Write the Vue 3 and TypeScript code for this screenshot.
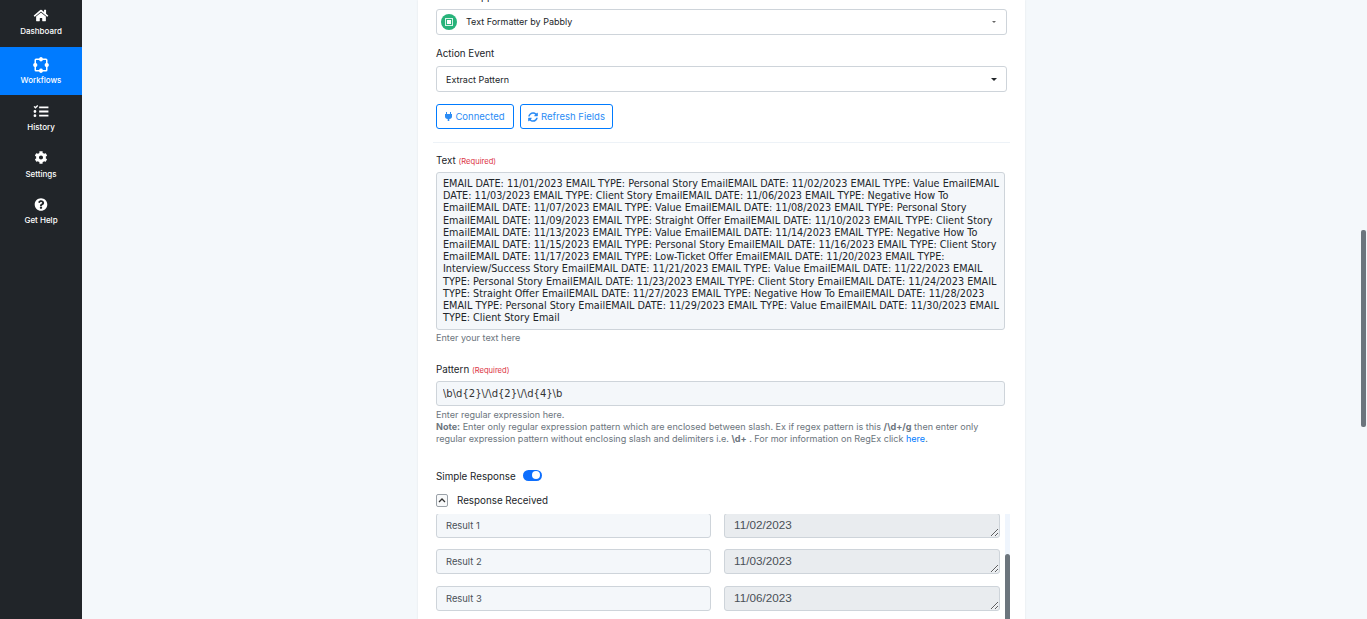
<template>
  <div class="page">
    <aside class="sidebar">
      <a v-for="item in navItems" :key="item.label" class="nav-item" :class="{ active: item.active }">
        <svg class="nav-icon" :viewBox="item.box" fill="currentColor"><path v-for="d in item.paths" :key="d" :d="d" /></svg>
        <span>{{ item.label }}</span>
      </a>
    </aside>

    <main class="main">
      <section class="card">
        <label class="label cut">Choose App</label>
        <div class="select app-select">
          <span class="app-logo"><i></i></span>
          <span>Text Formatter by Pabbly</span>
          <b class="caret small"></b>
        </div>

        <label class="label event">Action Event</label>
        <div class="select">
          <span class="select-text">Extract Pattern</span>
          <b class="caret"></b>
        </div>

        <div class="actions">
          <button class="btn btn-connected">
            <svg width="7" height="9" viewBox="0 0 7 9" fill="currentColor"><path d="M1 0h1v2h3V0h1v2h1v2.500C7 6 6 6.800 4.300 7V9H2.700V7C1 6.800 0 6 0 4.500V2h1z" /></svg>
            Connected
          </button>
          <button class="btn btn-refresh">
            <svg width="10" height="10" viewBox="0 0 512 512" fill="currentColor"><path d="M370.720 133.280C339.458 104.008 298.888 87.962 255.848 88c-77.458.068-144.328 53.178-162.791 126.850-1.344 5.363-6.122 9.150-11.651 9.150H24.103c-7.498 0-13.194-6.807-11.807-14.176C33.933 94.924 134.813 8 256 8c66.448 0 126.791 26.136 171.315 68.685L463.030 40.970C478.149 25.851 504 36.559 504 57.941V192c0 13.255-10.745 24-24 24H345.941c-21.382 0-32.090-25.851-16.971-40.971l41.750-41.749zM32 296h134.059c21.382 0 32.090 25.851 16.971 40.971l-41.750 41.750c31.262 29.273 71.835 45.319 114.876 45.280 77.418-.070 144.315-53.144 162.787-126.849 1.344-5.363 6.122-9.150 11.651-9.150h57.304c7.498 0 13.194 6.807 11.807 14.176C478.067 417.076 377.187 504 256 504c-66.448 0-126.791-26.136-171.315-68.685L48.970 471.030C33.851 486.149 8 475.441 8 454.059V320c0-13.255 10.745-24 24-24z" /></svg>
            Refresh Fields
          </button>
        </div>

        <hr class="divider" />

        <label class="label text-label">Text <em>(Required)</em></label>
        <textarea class="text-box" readonly wrap="off" :value="emailText"></textarea>
        <p class="hint">Enter your text here</p>

        <label class="label pattern-label">Pattern <em>(Required)</em></label>
        <input class="pattern" readonly value="\b\d{2}\/\d{2}\/\d{4}\b" />
        <div class="hint pattern-hint">
          Enter regular expression here.<br />
          <strong>Note:</strong> Enter only regular expression pattern which are enclosed between slash. Ex if regex pattern is this <strong>/\d+/g</strong> then enter only<br />
          regular expression pattern without enclosing slash and delimiters i.e. <strong>\d+</strong> . For mor information on RegEx click <a>here</a>.
        </div>

        <div class="simple-row">
          <span>Simple Response</span>
          <span class="toggle"><i></i></span>
        </div>

        <div class="response-head">
          <span class="collapse">
            <svg width="8" height="5" viewBox="0 0 8 5" fill="none" stroke="currentColor" stroke-width="1.300"><path d="M1 4l3-3 3 3" /></svg>
          </span>
          <span>Response Received</span>
        </div>

        <div class="results">
          <div v-for="row in results" :key="row.name" class="result-row">
            <div class="result-name">{{ row.name }}</div>
            <textarea class="result-value" readonly :value="row.value"></textarea>
          </div>
          <div class="results-thumb"></div>
        </div>
      </section>
    </main>

    <div class="page-thumb"></div>
  </div>
</template>

<script setup lang="ts">
const navItems = [
  {
    label: 'Dashboard',
    box: '0 0 576 512',
    paths: ['M280.370 148.260L96 300.110V464a16 16 0 0 0 16 16l112.060-.29a16 16 0 0 0 15.920-16V368a16 16 0 0 1 16-16h64a16 16 0 0 1 16 16v95.640a16 16 0 0 0 16 16.050L464 480a16 16 0 0 0 16-16V300L295.670 148.260a12.190 12.190 0 0 0-15.300 0zM571.600 251.470L488 182.560V44.050a12 12 0 0 0-12-12h-56a12 12 0 0 0-12 12v72.610L318.470 43a48 48 0 0 0-61 0L4.340 251.470a12 12 0 0 0-1.600 16.900l25.500 31A12 12 0 0 0 45.150 301l235.220-193.740a12.190 12.190 0 0 1 15.300 0L530.900 301a12 12 0 0 0 16.900-1.600l25.500-31a12 12 0 0 0-1.700-16.930z']
  },
  {
    label: 'Workflows',
    box: '0 0 16 16',
    active: true,
    paths: ['M8 0a2 2 0 0 1 1.900 1.500H13a1.500 1.500 0 0 1 1.500 1.500v3.100a2 2 0 0 1 0 3.800V13a1.500 1.500 0 0 1-1.500 1.500H9.900a2 2 0 0 1-3.800 0H3A1.500 1.500 0 0 1 1.500 13V9.900a2 2 0 0 1 0-3.800V3A1.500 1.500 0 0 1 3 1.500h3.100A2 2 0 0 1 8 0zM3 3v3.100a2 2 0 0 1 0 3.800V13h3.100a2 2 0 0 1 3.800 0H13V9.900a2 2 0 0 1 0-3.800V3H9.900a2 2 0 0 1-3.800 0z']
  },
  {
    label: 'History',
    box: '0 0 16 14',
    paths: ['M6 1.500h10v2H6zM6 6h10v2H6zM6 10.500h10v2H6zM0 2l1-1 1 1 2-2 1 1-3 3zM1.500 5.500a1.500 1.500 0 1 1 0 3 1.500 1.500 0 0 1 0-3zM1.500 10a1.500 1.500 0 1 1 0 3 1.500 1.500 0 0 1 0-3z']
  },
  {
    label: 'Settings',
    box: '0 0 512 512',
    paths: ['M487.400 315.700l-42.600-24.600c4.300-23.200 4.300-47 0-70.200l42.600-24.600c4.900-2.800 7.100-8.600 5.500-14-11.100-35.600-30-67.800-54.700-94.600-3.800-4.100-10-5.100-14.800-2.300L380.800 110c-17.900-15.400-38.500-27.300-60.800-35.100V25.800c0-5.600-3.900-10.500-9.400-11.700-36.700-8.200-74.300-7.800-109.200 0-5.500 1.200-9.400 6.100-9.400 11.700V75c-22.200 7.900-42.800 19.800-60.800 35.100L88.700 85.500c-4.900-2.800-11-1.900-14.800 2.300-24.700 26.700-43.600 58.900-54.700 94.600-1.700 5.400.6 11.200 5.500 14L67.300 221c-4.300 23.200-4.300 47 0 70.200l-42.600 24.600c-4.900 2.800-7.100 8.600-5.500 14 11.100 35.600 30 67.800 54.700 94.600 3.800 4.100 10 5.100 14.800 2.300l42.600-24.600c17.900 15.400 38.500 27.300 60.800 35.100v49.200c0 5.600 3.900 10.500 9.400 11.700 36.700 8.200 74.300 7.800 109.200 0 5.500-1.200 9.400-6.100 9.400-11.700v-49.200c22.200-7.900 42.800-19.800 60.800-35.100l42.600 24.600c4.900 2.800 11 1.900 14.800-2.300 24.700-26.700 43.600-58.900 54.700-94.600 1.500-5.500-.7-11.300-5.600-14.100zM256 336c-44.100 0-80-35.900-80-80s35.900-80 80-80 80 35.900 80 80-35.900 80-80 80z']
  },
  {
    label: 'Get Help',
    box: '0 0 512 512',
    paths: ['M504 256c0 136.997-111.043 248-248 248S8 392.997 8 256C8 119.083 119.043 8 256 8s248 111.083 248 248zM262.655 90c-54.497 0-89.255 22.957-116.549 63.758-3.536 5.286-2.353 12.415 2.715 16.258l34.699 26.310c5.205 3.947 12.621 3.008 16.665-2.122 17.864-22.658 30.113-35.797 57.303-35.797 20.429 0 45.698 13.148 45.698 32.958 0 14.976-12.363 22.667-32.534 33.976C247.128 238.528 216 254.941 216 296v4c0 6.627 5.373 12 12 12h56c6.627 0 12-5.373 12-12v-1.333c0-28.462 83.186-29.647 83.186-106.667 0-58.002-60.165-102-116.531-102zM256 338c-25.365 0-46 20.635-46 46 0 25.364 20.635 46 46 46s46-20.636 46-46c0-25.365-20.635-46-46-46z']
  }
]

const emailText = [
  'EMAIL DATE: 11/01/2023 EMAIL TYPE: Personal Story EmailEMAIL DATE: 11/02/2023 EMAIL TYPE: Value EmailEMAIL',
  'DATE: 11/03/2023 EMAIL TYPE: Client Story EmailEMAIL DATE: 11/06/2023 EMAIL TYPE: Negative How To',
  'EmailEMAIL DATE: 11/07/2023 EMAIL TYPE: Value EmailEMAIL DATE: 11/08/2023 EMAIL TYPE: Personal Story',
  'EmailEMAIL DATE: 11/09/2023 EMAIL TYPE: Straight Offer EmailEMAIL DATE: 11/10/2023 EMAIL TYPE: Client Story',
  'EmailEMAIL DATE: 11/13/2023 EMAIL TYPE: Value EmailEMAIL DATE: 11/14/2023 EMAIL TYPE: Negative How To',
  'EmailEMAIL DATE: 11/15/2023 EMAIL TYPE: Personal Story EmailEMAIL DATE: 11/16/2023 EMAIL TYPE: Client Story',
  'EmailEMAIL DATE: 11/17/2023 EMAIL TYPE: Low-Ticket Offer EmailEMAIL DATE: 11/20/2023 EMAIL TYPE:',
  'Interview/Success Story EmailEMAIL DATE: 11/21/2023 EMAIL TYPE: Value EmailEMAIL DATE: 11/22/2023 EMAIL',
  'TYPE: Personal Story EmailEMAIL DATE: 11/23/2023 EMAIL TYPE: Client Story EmailEMAIL DATE: 11/24/2023 EMAIL',
  'TYPE: Straight Offer EmailEMAIL DATE: 11/27/2023 EMAIL TYPE: Negative How To EmailEMAIL DATE: 11/28/2023',
  'EMAIL TYPE: Personal Story EmailEMAIL DATE: 11/29/2023 EMAIL TYPE: Value EmailEMAIL DATE: 11/30/2023 EMAIL',
  'TYPE: Client Story Email'
].join('\n')

const results = [
  { name: 'Result 1', value: '11/02/2023' },
  { name: 'Result 2', value: '11/03/2023' },
  { name: 'Result 3', value: '11/06/2023' }
]
</script>

<style scoped>
.page {
  position: relative;
  display: flex;
  width: 1367px;
  height: 619px;
  overflow: hidden;
  background: #f4f8fb;
  font-family: Inter, "Noto Sans", sans-serif;
  font-size: 9.8px;
  color: #212529;
}

.sidebar {
  flex: 0 0 82px;
  background: #212529;
  color: #fff;
  display: flex;
  flex-direction: column;
}

.nav-item {
  height: 47px;
  display: flex;
  flex-direction: column;
  align-items: center;
  justify-content: flex-end;
  gap: 4px;
  padding-bottom: 10px;
  box-sizing: border-box;
  font-size: 8px;
  font-weight: 500;
}

.nav-item:first-child,
.nav-item:last-child {
  padding-bottom: 11px;
}

.nav-item:nth-child(4) .nav-icon {
  margin-bottom: 1px;
}

.nav-item.active {
  height: 48px;
  background: #007bff;
}

.nav-item.active .nav-icon {
  height: 16px;
  margin-bottom: -2px;
}

.nav-icon {
  height: 13px;
  width: 16px;
}

.main {
  flex: 1;
  display: flex;
  padding-left: 336px;
}

.card {
  position: relative;
  width: 607px;
  height: 640px;
  flex: none;
  box-sizing: border-box;
  padding: 0 18px;
  background: #fff;
  box-shadow: 0 0 2px rgba(0, 0, 0, 0.08);
}

.label {
  display: block;
  font-size: 9.8px;
  line-height: 12px;
}

.cut {
  margin-top: -9px;
  margin-bottom: 6px;
}

.event {
  margin: 13px 0 6px;
}

.select {
  display: flex;
  align-items: center;
  justify-content: space-between;
  height: 26px;
  box-sizing: border-box;
  padding: 0 9px;
  border: 1px solid #ced4da;
  border-radius: 3px;
  background: #fff;
  font-size: 9px;
}

.select-text {
  padding-top: 1px;
}

.app-select {
  justify-content: flex-start;
  gap: 9px;
  padding-left: 4px;
  padding-bottom: 1px;
}

.app-logo {
  width: 16px;
  height: 16px;
  border-radius: 50%;
  background: #27b37a;
  display: flex;
  align-items: center;
  justify-content: center;
}

.app-logo i {
  width: 8px;
  height: 8px;
  border: 1px solid #d8f3e7;
  box-sizing: border-box;
  box-shadow: inset 0 0 0 1px #27b37a, inset 0 0 0 3px #fff;
}

.caret {
  width: 0;
  height: 0;
  border-left: 3.5px solid transparent;
  border-right: 3.5px solid transparent;
  border-top: 3.5px solid #212529;
}

.caret.small {
  margin-left: auto;
  margin-right: 1px;
  border-left-width: 2px;
  border-right-width: 2px;
  border-top: 2px solid #666;
}

.actions {
  display: flex;
  gap: 6px;
  margin-top: 12px;
}

.btn {
  height: 25px;
  box-sizing: border-box;
  padding: 0;
  border: 1px solid #007bff;
  border-radius: 3px;
  background: #fff;
  color: #2b8cf5;
  font: inherit;
  font-size: 9.5px;
  display: flex;
  align-items: center;
  justify-content: center;
  gap: 3px;
}

.btn-connected {
  width: 78px;
}

.btn-refresh {
  width: 93px;
}

.divider {
  margin: 13px -3px 0;
  border: 0;
  border-top: 1px solid #edf2f7;
}

.text-label {
  margin-top: 12px;
  margin-bottom: 4px;
}

em {
  font-style: normal;
  font-size: 7.6px;
  color: #dc3545;
}

.text-box {
  display: block;
  width: 569px;
  height: 158px;
  box-sizing: border-box;
  padding: 5px 6px;
  border: 1px solid #ced4da;
  border-radius: 3px;
  background: #f4f7fa;
  color: #212529;
  font-family: "DejaVu Sans", sans-serif;
  font-size: 9.68px;
  line-height: 12.18px;
  resize: none;
  overflow: hidden;
  outline: none;
}

.hint {
  margin: 2px 0 0;
  font-size: 9.05px;
  line-height: 12px;
  color: #6c757d;
}

.pattern-label {
  margin-top: 20px;
  margin-bottom: 4px;
}

.pattern {
  display: block;
  width: 569px;
  height: 25px;
  box-sizing: border-box;
  padding: 0 6px;
  border: 1px solid #ced4da;
  border-radius: 3px;
  background: #f4f7fa;
  color: #333;
  font-family: "DejaVu Sans", sans-serif;
  font-size: 10px;
  outline: none;
}

.pattern-hint {
  margin-top: 3px;
}

.pattern-hint a {
  color: #007bff;
}

.simple-row {
  display: flex;
  align-items: center;
  gap: 7px;
  margin-top: 24px;
  height: 14px;
  font-size: 9.8px;
}

.toggle {
  width: 19px;
  height: 11px;
  border-radius: 6px;
  background: #0d6efd;
  position: relative;
  display: block;
  margin-bottom: 2px;
}

.toggle i {
  position: absolute;
  right: 1.5px;
  top: 1.5px;
  width: 8px;
  height: 8px;
  border-radius: 50%;
  background: #fff;
}

.response-head {
  display: flex;
  align-items: center;
  gap: 9px;
  margin-top: 10px;
  height: 14px;
  font-size: 9.8px;
}

.collapse {
  width: 12px;
  height: 13px;
  box-sizing: border-box;
  border: 1px solid #9aa1a8;
  border-radius: 2px;
  background: #f8f9fa;
  display: flex;
  align-items: center;
  justify-content: center;
  color: #333;
}

.results {
  position: relative;
  margin-top: 7px;
  width: 574px;
  height: 130px;
  overflow: hidden;
  background: linear-gradient(to right, transparent 569px, #eff5fd 569px);
}

.result-row {
  display: flex;
  gap: 13px;
  margin-bottom: 12px;
}

.result-row:first-of-type {
  margin-top: -1px;
  margin-bottom: 11px;
}

.result-name {
  width: 275px;
  height: 25px;
  box-sizing: border-box;
  padding: 0 9px;
  display: flex;
  align-items: center;
  border: 1px solid #ced4da;
  border-radius: 3px;
  background: #f4f7fa;
  color: #495057;
  font-size: 9.4px;
}

.result-value {
  display: block;
  width: 276px;
  height: 25px;
  box-sizing: border-box;
  padding: 4px 9px;
  border: 1px solid #ced4da;
  border-radius: 3px;
  background: #e9ecef;
  color: #495057;
  font-family: "Liberation Sans", sans-serif;
  font-size: 11.7px;
  line-height: 14px;
  resize: vertical;
  overflow: hidden;
  outline: none;
}

.results-thumb {
  position: absolute;
  right: 0;
  top: 40px;
  bottom: 0;
  width: 5px;
  border-radius: 3px 3px 0 0;
  background: #6c757d;
}

.page-thumb {
  position: absolute;
  top: 230px;
  right: 1px;
  width: 5px;
  height: 197px;
  border-radius: 2px;
  background: #6c757d;
}
</style>

<style>
html,
body {
  margin: 0;
  overflow: hidden;
}
</style>
